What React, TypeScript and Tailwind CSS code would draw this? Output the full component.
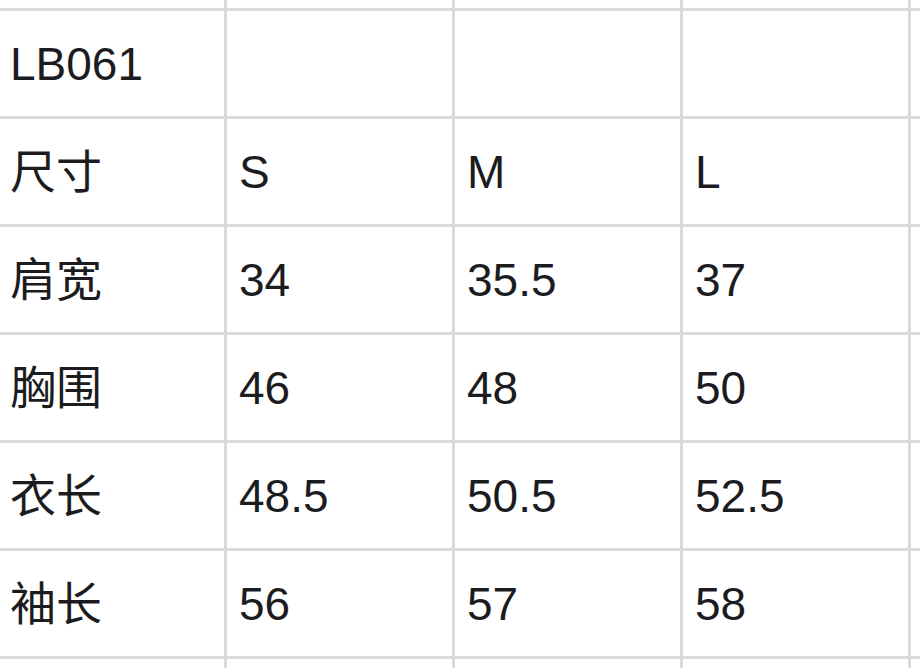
const rows: string[][] = [
  ["", "", "", "", ""],
  ["LB061", "", "", "", ""],
  ["尺寸", "S", "M", "L", ""],
  ["肩宽", "34", "35.5", "37", ""],
  ["胸围", "46", "48", "50", ""],
  ["衣长", "48.5", "50.5", "52.5", ""],
  ["袖长", "56", "57", "58", ""],
  ["", "", "", "", ""],
];

export default function App() {
  return (
    <div className="h-[668px] w-[920px] overflow-hidden bg-white">
      <div
        className="-mt-[97px] -ml-[1px] w-[1200px] text-[46px] leading-none text-[#1c1c1e]"
        style={{ fontFamily: '"Liberation Sans", "Noto Sans CJK SC", sans-serif' }}
      >
        {rows.map((row, i) => (
          <div key={i} className="grid grid-cols-[228px_228px_228px_228px_228px]">
            {row.map((cell, j) => (
              <div
                key={j}
                className={`flex h-[108px] items-center border-r-[3px] border-b-[3px] border-[#dadada] ${
                  j === 0 ? "pl-[11px]" : "pl-[12px]"
                }`}
              >
                {cell}
              </div>
            ))}
          </div>
        ))}
      </div>
    </div>
  );
}
